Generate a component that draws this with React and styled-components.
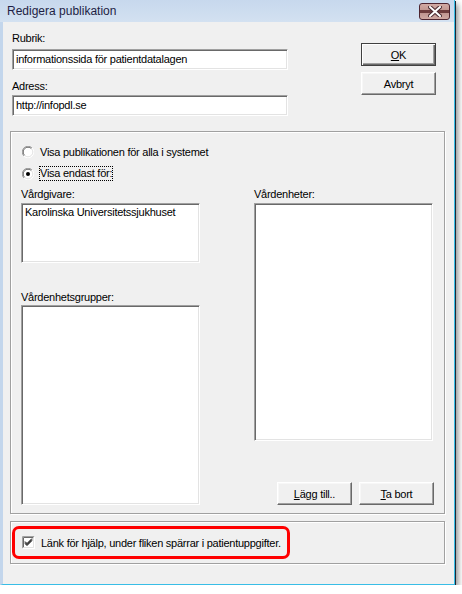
import styled, { createGlobalStyle } from "styled-components";

const GlobalStyle = createGlobalStyle`
  html, body {
    margin: 0;
    padding: 0;
    background: #ffffff;
  }
  body {
    font-family: "Liberation Sans", Arial, sans-serif;
    font-size: 11px;
    letter-spacing: -0.25px;
    color: #000;
  }
`;

const Window = styled.div`
  width: 451px;
  height: 584px;
  display: flex;
  flex-direction: column;
  background: #f0f0f0;
  border-left: 3px solid #c3d6ec;
  border-right: 1px solid #38bde6;
  border-bottom: 1px solid #38bde6;
  box-shadow: 1px 1px 0 #1c2838, 3px 4px 6px rgba(0, 0, 0, 0.45);
`;

const TitleBar = styled.div`
  height: 22px;
  flex-shrink: 0;
  display: flex;
  align-items: center;
  justify-content: space-between;
  margin-left: -3px;
  padding: 0 4px 0 7px;
  background: linear-gradient(#c7d8ed, #d3e1f1);
`;

const Title = styled.span`
  font-size: 12px;
  letter-spacing: 0;
  color: #1e1e44;
`;

const CloseButton = styled.div`
  width: 31px;
  height: 17px;
  margin-top: 1px;
  display: flex;
  align-items: center;
  justify-content: center;
  border: 1px solid #4e2530;
  border-radius: 3px;
  box-sizing: border-box;
  background: linear-gradient(#d2aaa4 0%, #c29892 40%, #6d3b3c 42%, #6d3b3c 58%, #c09590 60%, #cfa8a2 100%);
`;

const Body = styled.div`
  flex: 1;
  display: flex;
  flex-direction: column;
  padding: 10px 9px 0 7px;
`;

const TopRow = styled.div`
  display: flex;
  justify-content: space-between;
  padding-left: 2px;
`;

const Fields = styled.div`
  width: 276px;
  display: flex;
  flex-direction: column;
`;

const Label = styled.label`
  display: block;
  height: 13px;
  line-height: 13px;
  white-space: nowrap;
  margin-bottom: ${(p) => p.$gap ?? 4}px;
`;

const sunken = `
  box-sizing: border-box;
  background: #fff;
  border-top: 1px solid #a0a0a0;
  border-left: 1px solid #a0a0a0;
  border-right: 1px solid #fff;
  border-bottom: 1px solid #fff;
  box-shadow: inset 1px 1px 0 #696969, inset -1px -1px 0 #e3e3e3;
`;

const TextInput = styled.div`
  ${sunken}
  height: 21px;
  padding: 0 3px;
  line-height: 19px;
  white-space: nowrap;
  margin-bottom: ${(p) => p.$mb ?? 0}px;
`;

const ButtonColumn = styled.div`
  display: flex;
  flex-direction: column;
  gap: 6px;
  padding-top: 11px;
  margin-right: 9px;
`;

const Button = styled.div`
  width: 75px;
  height: 23px;
  box-sizing: border-box;
  display: flex;
  align-items: center;
  justify-content: center;
  white-space: nowrap;
  background: #f0f0f0;
  border-top: 1px solid #fff;
  border-left: 1px solid #fff;
  border-right: 1px solid #696969;
  border-bottom: 1px solid #696969;
  box-shadow: inset -1px -1px 0 #a0a0a0, inset 1px 1px 0 #f7f7f7;
  ${(p) =>
    p.$default &&
    `
    border: 1px solid #404040;
    box-shadow: inset 1px 1px 0 #fff, inset -1px -1px 0 #696969, inset -2px -2px 0 #a0a0a0;
  `}
`;

const Key = styled.span`
  text-decoration: underline;
  text-underline-offset: 1px;
`;

const GroupBox = styled.div`
  box-sizing: border-box;
  border: 1px solid #a0a0a0;
  box-shadow: inset 1px 1px 0 #fff, 1px 1px 0 #fff;
`;

const MainGroup = styled(GroupBox)`
  margin-top: 15px;
  height: 383px;
  padding: 14px 11px 10px 10px;
  display: flex;
  flex-direction: column;
`;

const RadioRow = styled.div`
  display: flex;
  align-items: center;
  gap: 6px;
  height: 14px;
  margin-left: 1px;
  white-space: nowrap;
  margin-bottom: ${(p) => p.$mb ?? 0}px;
`;

const FocusText = styled.span`
  outline: 1px dotted #000;
  line-height: 13px;
`;

const Columns = styled.div`
  flex: 1;
  display: flex;
  justify-content: space-between;
  margin-top: 8px;
`;

const Column = styled.div`
  width: 179px;
  display: flex;
  flex-direction: column;
`;

const ListBox = styled.div`
  ${sunken}
  height: ${(p) => p.$h}px;
  padding: 2px 3px;
  line-height: 13px;
  white-space: nowrap;
  margin-bottom: ${(p) => p.$mb ?? 0}px;
`;

const ActionRow = styled.div`
  display: flex;
  justify-content: flex-end;
  gap: 7px;
  margin-top: auto;
  margin-right: -1px;
`;

const BottomGroup = styled(GroupBox)`
  margin-top: 7px;
  height: 43px;
  padding: 4px 0 0 1px;
`;

const Highlight = styled.div`
  width: 278px;
  height: 33px;
  box-sizing: border-box;
  border: 3px solid #ff0000;
  border-radius: 7px;
  display: flex;
  align-items: center;
  gap: 6px;
  padding-left: 7px;
  white-space: nowrap;
`;

function Radio({ checked }) {
  return (
    <svg width="12" height="12" viewBox="0 0 12 12">
      <circle cx="6" cy="6" r="5.5" fill="#fff" />
      <path d="M1.9 10.1 A5.5 5.5 0 0 1 10.1 1.9" stroke="#a0a0a0" fill="none" />
      <path d="M2.6 9.4 A4.5 4.5 0 0 1 9.4 2.6" stroke="#696969" fill="none" />
      <path d="M10.1 1.9 A5.5 5.5 0 0 1 1.9 10.1" stroke="#fff" fill="none" />
      <path d="M9.4 2.6 A4.5 4.5 0 0 1 2.6 9.4" stroke="#e3e3e3" fill="none" />
      {checked && <circle cx="6" cy="6" r="2" fill="#000" />}
    </svg>
  );
}

function Checkbox() {
  return (
    <svg width="13" height="13" viewBox="0 0 13 13">
      <rect x="0" y="0" width="13" height="13" fill="#fff" />
      <path d="M0.5 12.5 V0.5 H12.5" stroke="#a0a0a0" fill="none" />
      <path d="M1.5 11.5 V1.5 H11.5" stroke="#696969" fill="none" />
      <path d="M12.5 0.5 V12.5 H0.5" stroke="#fff" fill="none" />
      <path d="M11.5 1.5 V11.5 H1.5" stroke="#e3e3e3" fill="none" />
      <path d="M3 5.5 L5 7.5 L10 2.5 M3 6.5 L5 8.5 L10 3.5 M3 7.5 L5 9.5 L10 4.5" stroke="#000" fill="none" />
    </svg>
  );
}

function CloseGlyph() {
  return (
    <svg width="14" height="11" viewBox="0 0 14 11">
      <path d="M2 1 L12 10 M12 1 L2 10" stroke="#4a2a30" strokeWidth="4" strokeLinecap="square" />
      <path d="M2 1 L12 10 M12 1 L2 10" stroke="#ffffff" strokeWidth="2" strokeLinecap="square" />
    </svg>
  );
}

export default function App() {
  return (
    <>
      <GlobalStyle />
      <Window>
        <TitleBar>
          <Title>Redigera publikation</Title>
          <CloseButton>
            <CloseGlyph />
          </CloseButton>
        </TitleBar>
        <Body>
          <TopRow>
            <Fields>
              <Label $gap={4}>Rubrik:</Label>
              <TextInput $mb={10}>informationssida för patientdatalagen</TextInput>
              <Label $gap={2}>Adress:</Label>
              <TextInput>http://infopdl.se</TextInput>
            </Fields>
            <ButtonColumn>
              <Button $default>
                <span>
                  <Key>O</Key>K
                </span>
              </Button>
              <Button>Avbryt</Button>
            </ButtonColumn>
          </TopRow>

          <MainGroup>
            <RadioRow $mb={9}>
              <Radio />
              <span>Visa publikationen för alla i systemet</span>
            </RadioRow>
            <RadioRow>
              <Radio checked />
              <FocusText>Visa endast för:</FocusText>
            </RadioRow>
            <Columns>
              <Column>
                <Label $gap={2}>Vårdgivare:</Label>
                <ListBox $h={60} $mb={28}>
                  Karolinska Universitetssjukhuset
                </ListBox>
                <Label $gap={1}>Vårdenhetsgrupper:</Label>
                <ListBox $h={200} />
              </Column>
              <Column>
                <Label $gap={2}>Vårdenheter:</Label>
                <ListBox $h={238} />
                <ActionRow>
                  <Button>
                    <span>
                      <Key>L</Key>ägg till..
                    </span>
                  </Button>
                  <Button>
                    <span>
                      <Key>T</Key>a bort
                    </span>
                  </Button>
                </ActionRow>
              </Column>
            </Columns>
          </MainGroup>

          <BottomGroup>
            <Highlight>
              <Checkbox />
              <span>Länk för hjälp, under fliken spärrar i patientuppgifter.</span>
            </Highlight>
          </BottomGroup>
        </Body>
      </Window>
    </>
  );
}
